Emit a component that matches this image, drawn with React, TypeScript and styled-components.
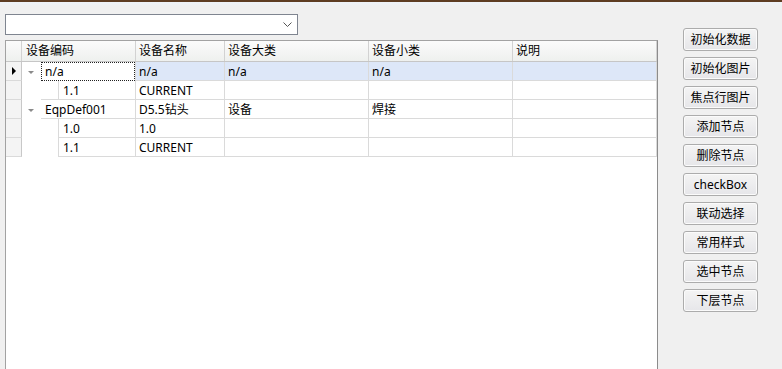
import React from "react";
import styled, { createGlobalStyle } from "styled-components";

const LINE = "#dadada";

const GlobalStyle = createGlobalStyle`
  html, body {
    margin: 0;
    padding: 0;
    background: #f0f0f0;
    overflow: hidden;
  }
  * {
    box-sizing: border-box;
  }
`;

// ウィンドウ全体
const Page = styled.div`
  width: 782px;
  height: 369px;
  display: flex;
  flex-direction: column;
  font-family: "Noto Sans", "Noto Sans CJK SC", sans-serif;
  font-size: 12px;
  color: #000;
`;

const TopStrip = styled.div`
  height: 6px;
  flex: none;
  border-top: 2px solid #5e3d22;
  background: linear-gradient(#eef3f9, #f0f0f0);
`;

const Body = styled.div`
  flex: 1;
  display: flex;
  min-height: 0;
`;

const LeftPane = styled.div`
  width: 658px;
  padding-left: 5px;
  padding-top: 8px;
  display: flex;
  flex-direction: column;
`;

const Combo = styled.div`
  width: 293px;
  height: 21px;
  flex: none;
  background: #fff;
  border: 1px solid #7f8590;
  display: flex;
  align-items: center;
  justify-content: flex-end;
  padding-right: 5px;
`;

const Grid = styled.div`
  margin-top: 5px;
  width: 653px;
  height: 340px;
  flex: none;
  background: #fff;
  border: 1px solid #a2a2a2;
  border-right-color: #8c8c8c;
`;

const COLS = "16px 114px 89px 144px 144px 144px";

const HeaderRow = styled.div`
  display: grid;
  grid-template-columns: ${COLS};
  grid-template-rows: 20px;
  height: 21px;
  background: linear-gradient(#fbfbfb, #eef0ee);
  border-bottom: 1px solid #c6c6c6;
`;

const HeaderCell = styled.div<{ $pad?: number }>`
  border-right: 1px solid #d2d2d2;
  padding-left: ${(p) => p.$pad ?? 3}px;
  line-height: 20px;
  white-space: nowrap;
  overflow: hidden;
`;

const Row = styled.div`
  display: grid;
  grid-template-columns: ${COLS};
  grid-template-rows: 19px;
  height: 19px;
`;

const Indicator = styled.div`
  background: #f4f4f4;
  border-right: 1px solid #c8c8c8;
  border-bottom: 1px solid ${LINE};
  display: flex;
  align-items: center;
  justify-content: center;
`;

const Arrow = styled.div`
  width: 0;
  height: 0;
  border-top: 4px solid transparent;
  border-bottom: 4px solid transparent;
  border-left: 4px solid #000;
  margin-left: 1px;
`;

const Cell = styled.div<{ $selected?: boolean }>`
  height: 19px;
  background: ${(p) => (p.$selected ? "#dde7f8" : "#fff")};
  border-right: 1px solid ${LINE};
  border-bottom: 1px solid ${LINE};
  padding-left: 3px;
  line-height: 19px;
  white-space: nowrap;
  overflow: hidden;
`;

const TreeCell = styled.div`
  height: 19px;
  display: flex;
  border-right: 1px solid ${LINE};
  background: #fff;
`;

const Indent = styled.div<{ $width: number }>`
  width: ${(p) => p.$width}px;
  flex: none;
  display: flex;
  align-items: center;
  padding-left: 6px;
`;

const Expander = styled.div`
  width: 0;
  height: 0;
  border-left: 3px solid transparent;
  border-right: 3px solid transparent;
  border-top: 3px solid #8a8a8a;
  margin-top: 1px;
`;

const TreeText = styled.div<{ $child?: boolean; $focused?: boolean; $top?: boolean }>`
  flex: 1;
  min-width: 0;
  height: 19px;
  line-height: 19px;
  white-space: nowrap;
  overflow: hidden;
  border-bottom: 1px solid ${LINE};
  border-left: ${(p) => (p.$child ? `1px solid ${LINE}` : "none")};
  padding-left: 4px;
  box-shadow: ${(p) => (p.$top ? `0 -1px 0 ${LINE}` : "none")};
  ${(p) =>
    p.$focused &&
    `
    border: 1px dotted #222;
    padding-left: 3px;
    line-height: 18px;
  `}
`;

const RightPane = styled.div`
  padding-left: 25px;
  padding-top: 22px;
  display: flex;
  flex-direction: column;
  gap: 6px;
`;

const Button = styled.button`
  width: 75px;
  height: 23px;
  padding: 0;
  border: 1px solid #acacac;
  border-radius: 3px;
  background: linear-gradient(#f4f4f4, #e6e6e9);
  box-shadow: inset 0 0 0 1px #fbfbfb;
  font-family: "Noto Sans", "Noto Sans CJK SC", sans-serif;
  font-size: 12px;
  color: #000;
  line-height: 21px;
  cursor: pointer;
`;

type Node = {
  code: string;
  name: string;
  major: string;
  minor: string;
  level: number;
  selected?: boolean;
};

const rows: Node[] = [
  { code: "n/a", name: "n/a", major: "n/a", minor: "n/a", level: 0, selected: true },
  { code: "1.1", name: "CURRENT", major: "", minor: "", level: 1 },
  { code: "EqpDef001", name: "D5.5钻头", major: "设备", minor: "焊接", level: 0 },
  { code: "1.0", name: "1.0", major: "", minor: "", level: 1 },
  { code: "1.1", name: "CURRENT", major: "", minor: "", level: 1 },
];

const columns = ["设备编码", "设备名称", "设备大类", "设备小类", "说明"];

const buttons = [
  "初始化数据",
  "初始化图片",
  "焦点行图片",
  "添加节点",
  "删除节点",
  "checkBox",
  "联动选择",
  "常用样式",
  "选中节点",
  "下层节点",
];

const App: React.FC = () => {
  return (
    <Page>
      <GlobalStyle />
      <TopStrip />
      <Body>
        <LeftPane>
          <Combo>
            <svg width="9" height="6" viewBox="0 0 9 6">
              <polyline
                points="0.5,0.5 4.5,4.5 8.5,0.5"
                fill="none"
                stroke="#555"
                strokeWidth="1"
              />
            </svg>
          </Combo>
          <Grid>
            <HeaderRow>
              <HeaderCell />
              {columns.map((c, i) => (
                <HeaderCell key={c} $pad={i === 0 ? 4 : 3}>
                  {c}
                </HeaderCell>
              ))}
            </HeaderRow>
            {rows.map((r, i) => (
              <Row key={i}>
                <Indicator>{r.selected && <Arrow />}</Indicator>
                <TreeCell>
                  <Indent $width={r.level === 0 ? 19 : 36}>
                    {r.level === 0 && <Expander />}
                  </Indent>
                  <TreeText
                    $child={r.level > 0}
                    $focused={r.selected}
                    $top={r.level === 0 && i > 0}
                  >
                    {r.code}
                  </TreeText>
                </TreeCell>
                <Cell $selected={r.selected}>{r.name}</Cell>
                <Cell $selected={r.selected}>{r.major}</Cell>
                <Cell $selected={r.selected}>{r.minor}</Cell>
                <Cell $selected={r.selected} />
              </Row>
            ))}
          </Grid>
        </LeftPane>
        <RightPane>
          {buttons.map((b) => (
            <Button key={b}>{b}</Button>
          ))}
        </RightPane>
      </Body>
    </Page>
  );
};

export default App;
